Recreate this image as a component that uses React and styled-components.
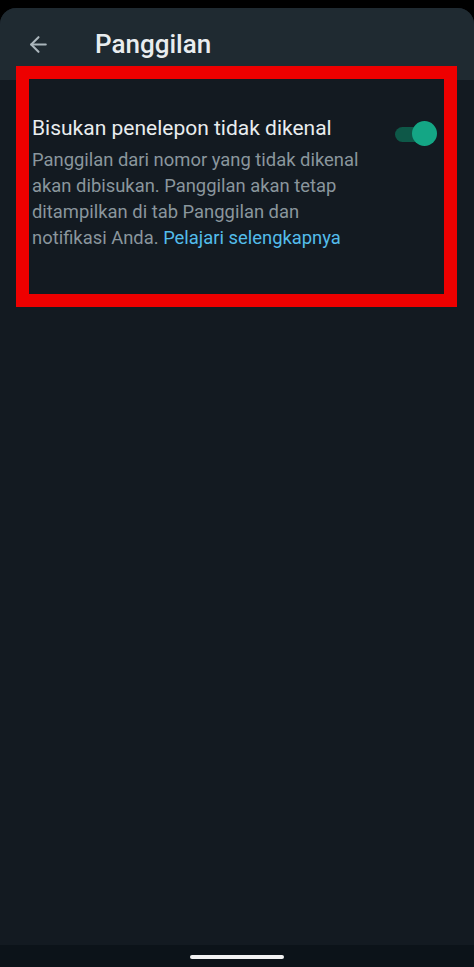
import React, { useState } from "react";
import styled, { createGlobalStyle } from "styled-components";
import { ArrowLeft } from "lucide-react";

const GlobalStyle = createGlobalStyle`
  html, body {
    margin: 0;
    padding: 0;
    background: #000000;
  }
  * {
    box-sizing: border-box;
  }
`;

export default function App() {
  const [muted, setMuted] = useState(true);

  return (
    <Screen>
      <GlobalStyle />
      <Phone>
        <AppBar>
          <BackButton aria-label="Kembali">
            <ArrowLeft size={25} strokeWidth={2} />
          </BackButton>
          <Title>Panggilan</Title>
        </AppBar>

        <Content>
          <Highlight>
            <SettingRow>
              <SettingText>
                <SettingTitle>Bisukan penelepon tidak dikenal</SettingTitle>
                <SettingDesc>
                  Panggilan dari nomor yang tidak dikenal akan dibisukan.
                  Panggilan akan tetap ditampilkan di tab Panggilan dan
                  notifikasi Anda. <Link href="#">Pelajari selengkapnya</Link>
                </SettingDesc>
              </SettingText>
              <Toggle
                role="switch"
                aria-checked={muted}
                $on={muted}
                onClick={() => setMuted((prev) => !prev)}
              >
                <Thumb $on={muted} />
              </Toggle>
            </SettingRow>
          </Highlight>
        </Content>

        <NavBar>
          <HomePill />
        </NavBar>
      </Phone>
    </Screen>
  );
}

const Screen = styled.div`
  height: 967px;
  padding-top: 8px;
  display: flex;
  flex-direction: column;
  background: #000000;
  font-family: Roboto, "Noto Sans", sans-serif;
`;

const Phone = styled.div`
  flex: 1;
  display: flex;
  flex-direction: column;
  border-radius: 16px 16px 0 0;
  overflow: hidden;
  background: #131a21;
`;

const AppBar = styled.header`
  height: 72px;
  flex-shrink: 0;
  display: flex;
  align-items: center;
  padding: 0 0 0 24px;
  background: #1f2a31;
`;

const BackButton = styled.button`
  width: 28px;
  height: 28px;
  padding: 0;
  border: none;
  background: none;
  color: #aab5bb;
  display: flex;
  align-items: center;
  justify-content: center;
  cursor: pointer;
`;

const Title = styled.h1`
  margin: 0 0 0 43px;
  font-size: 26px;
  font-weight: 500;
  color: #e9edef;
`;

const Content = styled.main`
  flex: 1;
  padding: 0 17px 0 16px;
`;

const Highlight = styled.section`
  position: relative;
  margin-top: -14px;
  height: 241px;
  border: 13px solid #ee0000;
  background: #131a21;
  padding: 37px 7px 0 3px;
`;

const SettingRow = styled.div`
  display: flex;
  align-items: flex-start;
  justify-content: space-between;
`;

const SettingText = styled.div`
  width: 328px;
  flex-shrink: 0;
`;

const SettingTitle = styled.div`
  font-size: 21px;
  line-height: 24px;
  color: #e9edef;
  white-space: nowrap;
`;

const SettingDesc = styled.p`
  margin: 7px 0 0;
  font-size: 18.4px;
  line-height: 26px;
  color: #8a969d;
`;

const Link = styled.a`
  color: #53bdeb;
  text-decoration: none;
`;

const Toggle = styled.button`
  position: relative;
  width: 42px;
  height: 26px;
  margin-top: 5px;
  padding: 0;
  border: none;
  background: none;
  cursor: pointer;

  &::before {
    content: "";
    position: absolute;
    left: 0;
    top: 6px;
    width: 34px;
    height: 15px;
    border-radius: 8px;
    background: ${(p) => (p.$on ? "#0e5848" : "#3b4a54")};
  }
`;

const Thumb = styled.span`
  position: absolute;
  top: 0;
  left: ${(p) => (p.$on ? "17px" : "0")};
  width: 25px;
  height: 25px;
  border-radius: 50%;
  background: ${(p) => (p.$on ? "#14a685" : "#aebac1")};
`;

const NavBar = styled.footer`
  height: 22px;
  flex-shrink: 0;
  display: flex;
  justify-content: center;
  padding-top: 10px;
  background: #0c1319;
`;

const HomePill = styled.div`
  width: 94px;
  height: 4px;
  border-radius: 2px;
  background: #f2f2f2;
`;
